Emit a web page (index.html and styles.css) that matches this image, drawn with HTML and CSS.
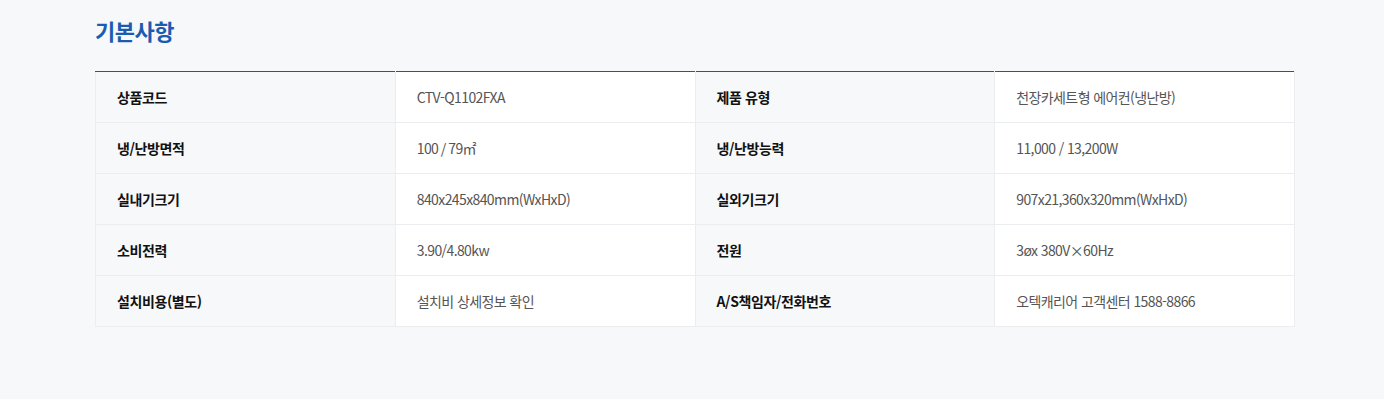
FILE: index.html
```html
<!DOCTYPE html>
<html lang="ko">
<head>
<meta charset="utf-8">
<link rel="stylesheet" href="styles.css">
</head>
<body>
<section class="spec">
  <h2 class="spec-title">기본사항</h2>
  <table class="spec-table">
    <colgroup>
      <col class="col-w">
      <col class="col-w">
      <col class="col-w">
      <col class="col-w">
    </colgroup>
    <tbody>
      <tr>
        <th>상품코드</th><td>CTV-Q1102FXA</td>
        <th>제품 유형</th><td>천장카세트형 에어컨(냉난방)</td>
      </tr>
      <tr>
        <th>냉/난방면적</th><td>100 / 79㎡</td>
        <th>냉/난방능력</th><td>11,000 / 13,200W</td>
      </tr>
      <tr>
        <th>실내기크기</th><td>840x245x840mm(WxHxD)</td>
        <th>실외기크기</th><td>907x21,360x320mm(WxHxD)</td>
      </tr>
      <tr>
        <th>소비전력</th><td>3.90/4.80kw</td>
        <th>전원</th><td>3øx 380V×60Hz</td>
      </tr>
      <tr>
        <th>설치비용(별도)</th><td>설치비 상세정보 확인</td>
        <th>A/S책임자/전화번호</th><td>오텍캐리어 고객센터 1588-8866</td>
      </tr>
    </tbody>
  </table>
</section>
</body>
</html>
```
FILE: styles.css
```css
html, body {
  margin: 0;
  padding: 0;
  background: #f7f8fa;
}
body {
  font-family: "Noto Sans CJK KR", "Noto Sans", sans-serif;
  width: 1384px;
  height: 399px;
  overflow: hidden;
}
.spec {
  padding: 14px 0 0 95px;
}
.spec-title {
  margin: 0;
  font-size: 22px;
  line-height: 32px;
  font-weight: 700;
  color: #1b5cb0;
  letter-spacing: -0.5px;
}
.spec-table {
  margin-top: 25px;
  width: 1200px;
  border-collapse: collapse;
  table-layout: fixed;
}
.col-w {
  width: 25%;
}
.spec-table th,
.spec-table td {
  height: 50px;
  padding: 0 0 0 21px;
  border: 1px solid #ebedf0;
  text-align: left;
  font-size: 14px;
  vertical-align: middle;
}
.spec-table tr:first-child th,
.spec-table tr:first-child td {
  border-top: 1px solid #1d55a5;
}
.spec-table th {
  background: #f7f8fa;
  color: #111;
  font-weight: 700;
  letter-spacing: -0.4px;
}
.spec-table td {
  background: #fff;
  color: #555;
  font-weight: 400;
  letter-spacing: -0.6px;
}
```
